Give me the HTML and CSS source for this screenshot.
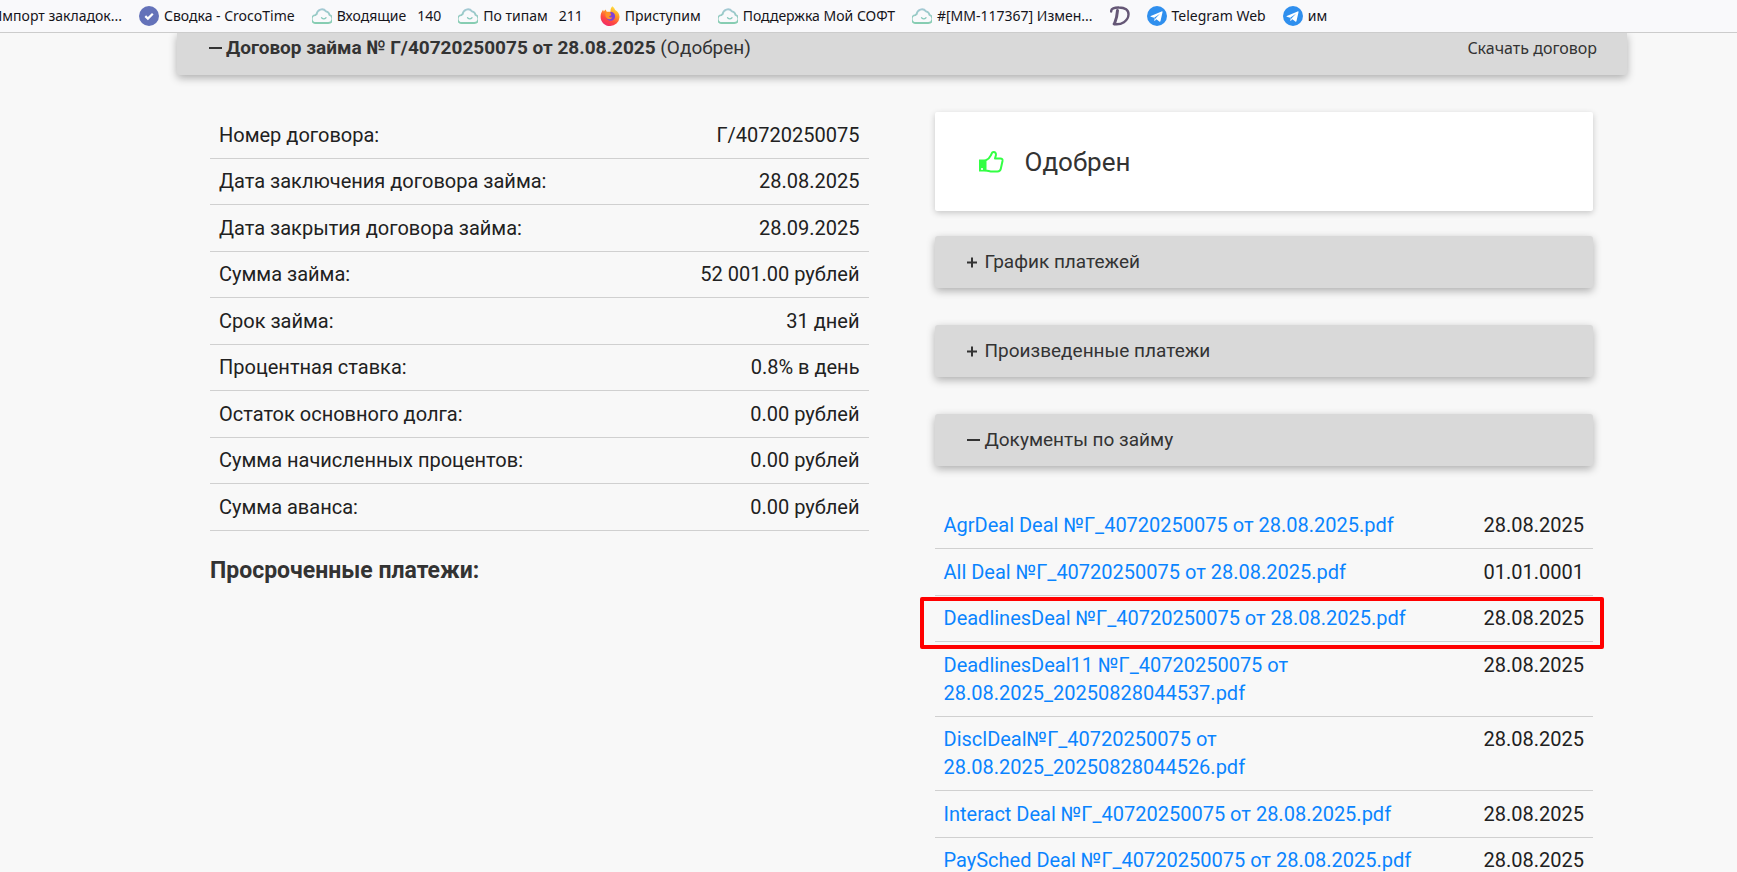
FILE: index.html
```html
<!DOCTYPE html>
<html lang="ru">
<head>
<meta charset="utf-8">
<title>Договор займа</title>
<link rel="stylesheet" href="styles.css">
</head>
<body>
<svg class="sprite" aria-hidden="true">
  <defs>
    <linearGradient id="cloud-line" x1="0" y1="0" x2="0" y2="1">
      <stop offset="0" stop-color="#a3c9d3"/>
      <stop offset="1" stop-color="#86cdb1"/>
    </linearGradient>
    <linearGradient id="fox-body" x1="0.8" y1="0" x2="0.3" y2="1">
      <stop offset="0" stop-color="#fff04a"/>
      <stop offset="0.35" stop-color="#ffa025"/>
      <stop offset="0.7" stop-color="#ff4a3f"/>
      <stop offset="1" stop-color="#f02a6b"/>
    </linearGradient>
    <symbol id="cloud" viewBox="0 0 20 20">
      <path d="M4.500 16.300H15.500a3.700 3.700 0 0 0 1.300-7.200 4 4 0 0 0-3.200-3.300A4.700 4.700 0 0 0 5.200 8.300 3.300 3.300 0 0 0 4 9.300 3.500 3.500 0 0 0 4.500 16.300z" fill="none" stroke="url(#cloud-line)" stroke-width="1.600" stroke-linejoin="round"/>
      <path d="M9.600 11.600q2 1.900 4 0" fill="none" stroke="#86c9bb" stroke-width="1.200" stroke-linecap="round"/>
    </symbol>
    <symbol id="telegram" viewBox="0 0 20 20">
      <circle cx="10" cy="10" r="10" fill="#2f8fee"/>
      <path d="M3.800 9.900 14.600 5.400c.8-.3 1.100.1.900.9l-2 8.700c-.2.700-.6.800-1.200.4l-2.900-2.200-1.500 1.500c-.3.300-.7.200-.7-.3l-.1-2.700-3.200-1c-.7-.2-.7-.6-.1-.8z" fill="#fff"/>
      <path d="M7.200 11.800 13 7.700l-4.600 4.800-.6 2z" fill="#2f8fee"/>
    </symbol>
  </defs>
</svg>

<nav class="bookmarks" aria-label="Закладки">
  <a class="bookmark bookmark-cut" href="#">Импорт закладок...</a>
  <a class="bookmark" href="#"><svg class="favicon" viewBox="0 0 20 20"><circle cx="10" cy="10" r="10" fill="#6472b9"/><path d="M6.300 10.100l2.600 2.500 4.900-4.900" fill="none" stroke="#fff" stroke-width="2.200"/></svg><span>Сводка - CrocoTime</span></a>
  <a class="bookmark" href="#"><svg class="favicon" viewBox="1 1 18 18"><use href="#cloud" width="20" height="20"/></svg><span>Входящие</span><span class="count">140</span></a>
  <a class="bookmark" href="#"><svg class="favicon" viewBox="1 1 18 18"><use href="#cloud" width="20" height="20"/></svg><span>По типам</span><span class="count">211</span></a>
  <a class="bookmark" href="#"><svg class="favicon" viewBox="0 0 20 20"><path d="M12.300.2c1.800 1.300 2.500 2.500 2.900 3.900 2.600 1.300 4.400 4 4.300 7.100A9.400 9.400 0 0 1 10 20C4.800 20 .6 16 .6 10.900c0-3 .9-5 2.400-7.200l.8 1.900c.6-.8 1-1.300 1.900-2l.9 2.100 4 .1c-.3-2.200.3-4.200 1.700-5.600z" fill="url(#fox-body)"/><path d="M10.600 5.800c3 .2 4.600 2.200 4.500 4.700-.1 2.400-2 4.300-4.400 4.300-2.600 0-4.600-1.700-4.700-4.300l2.900.2 2.300-1.600c-.8-.8-1.400-1.800-.6-3.300z" fill="#8040d8"/><path d="M6 5.700l3.500 1c.8.8 1.600 1.200 1.700 2.200-.8.500-1.800.5-2.200 1.500.6 1.100 2 1.400 3.300.8-.9 2.200-3.900 2.700-5.600 1.100C5.200 10.800 5 8 6 5.700z" fill="#ff9328"/></svg><span>Приступим</span></a>
  <a class="bookmark" href="#"><svg class="favicon" viewBox="1 1 18 18"><use href="#cloud" width="20" height="20"/></svg><span>Поддержка Мой СОФТ</span></a>
  <a class="bookmark" href="#"><svg class="favicon" viewBox="1 1 18 18"><use href="#cloud" width="20" height="20"/></svg><span>#[MM-117367] Измен...</span></a>
  <a class="bookmark" href="#" aria-label="D"><svg class="favicon" viewBox="0 0 20 20" fill="none" stroke="#655776" stroke-linecap="round"><path d="M7.500 4.500C7.200 10 6 14 4.500 17.800" stroke-width="3"/><path d="M1.200 5.500C.8 2.500 4.500 1.400 9 1.500c6 0 9.700 2.300 9.500 7C18.200 15 11.500 19.300 3.800 18" stroke-width="2.400"/></svg></a>
  <a class="bookmark" href="#"><svg class="favicon"><use href="#telegram"/></svg><span>Telegram Web</span></a>
  <a class="bookmark" href="#"><svg class="favicon"><use href="#telegram"/></svg><span>им</span></a>
</nav>

<main class="page">
  <header class="deal-bar">
    <button class="deal-toggle" type="button"><svg class="sign" viewBox="0 0 13 13"><path d="M0 6h13" /></svg><span><b>Договор займа № Г/40720250075 от 28.08.2025</b> (Одобрен)</span></button>
    <a class="download" href="#">Скачать договор</a>
  </header>

  <div class="columns">
    <section class="column">
      <table class="rows">
        <tbody>
          <tr><th scope="row">Номер договора:</th><td>Г/40720250075</td></tr>
          <tr><th scope="row">Дата заключения договора займа:</th><td>28.08.2025</td></tr>
          <tr><th scope="row">Дата закрытия договора займа:</th><td>28.09.2025</td></tr>
          <tr><th scope="row">Сумма займа:</th><td>52 001.00 рублей</td></tr>
          <tr><th scope="row">Срок займа:</th><td>31 дней</td></tr>
          <tr><th scope="row">Процентная ставка:</th><td>0.8% в день</td></tr>
          <tr><th scope="row">Остаток основного долга:</th><td>0.00 рублей</td></tr>
          <tr><th scope="row">Сумма начисленных процентов:</th><td>0.00 рублей</td></tr>
          <tr><th scope="row">Сумма аванса:</th><td>0.00 рублей</td></tr>
        </tbody>
      </table>
      <h2 class="overdue">Просроченные платежи:</h2>
    </section>

    <section class="column">
      <div class="status">
        <svg class="thumb" viewBox="0 0 25 22"><path d="M0 8.500h6.500v12H0z" fill="#3f4"/><circle cx="3" cy="18" r="1.100" fill="#fff"/><path d="M6.500 9.500C9 8.500 11 6.500 12 4.200c.5-1.500.8-3.200 2.600-3.200 1.900 0 2.600 1.600 2.300 3.300L16 7.500h5.200c2 0 2.500 1.100 2.300 2.500l-1.700 7.800c-.4 2-1.600 2.700-3.300 2.700h-5C10.500 20.500 9 19.500 6.500 19.500z" fill="none" stroke="#3f4" stroke-width="2" stroke-linejoin="round"/></svg>
        <span>Одобрен</span>
      </div>
      <div class="accordion">
        <button class="panel" type="button"><svg class="sign" viewBox="0 0 13 13"><path d="M0 6.500h10M5 1.500v10"/></svg><span>График платежей</span></button>
        <button class="panel" type="button"><svg class="sign" viewBox="0 0 13 13"><path d="M0 6.500h10M5 1.500v10"/></svg><span>Произведенные платежи</span></button>
        <button class="panel" type="button" aria-expanded="true"><svg class="sign" viewBox="0 0 13 13"><path d="M0 6h13"/></svg><span>Документы по займу</span></button>
      </div>
      <table class="rows documents">
        <tbody>
          <tr><th scope="row"><a href="#">AgrDeal Deal №Г_40720250075 от 28.08.2025.pdf</a></th><td>28.08.2025</td></tr>
          <tr><th scope="row"><a href="#">All Deal №Г_40720250075 от 28.08.2025.pdf</a></th><td>01.01.0001</td></tr>
          <tr class="marked"><th scope="row"><a href="#">DeadlinesDeal №Г_40720250075 от 28.08.2025.pdf</a></th><td>28.08.2025</td></tr>
          <tr><th scope="row"><a href="#">DeadlinesDeal11 №Г_40720250075 от 28.08.2025_20250828044537.pdf</a></th><td>28.08.2025</td></tr>
          <tr><th scope="row"><a href="#">DisclDeal№Г_40720250075 от 28.08.2025_20250828044526.pdf</a></th><td>28.08.2025</td></tr>
          <tr><th scope="row"><a href="#">Interact Deal №Г_40720250075 от 28.08.2025.pdf</a></th><td>28.08.2025</td></tr>
          <tr><th scope="row"><a href="#">PaySched Deal №Г_40720250075 от 28.08.2025.pdf</a></th><td>28.08.2025</td></tr>
        </tbody>
      </table>
    </section>
  </div>
</main>
</body>
</html>
```

FILE: styles.css
```css
* { box-sizing: border-box; }

html { height: 100%; }

body {
  display: flex;
  flex-direction: column;
  height: 100%;
  margin: 0;
  overflow: hidden;
  background: #f8f8f8;
  color: #212121;
  font-family: Roboto, sans-serif;
  font-size: 20px;
  line-height: 28px;
}

a { color: inherit; text-decoration: none; }

button {
  border: 0;
  background: none;
  color: inherit;
  font: inherit;
  text-align: left;
}

.sprite { position: absolute; width: 0; height: 0; }

.bookmarks {
  position: relative;
  z-index: 1;
  display: flex;
  flex: none;
  gap: 17px;
  height: 33px;
  padding-bottom: 1px;
  overflow: hidden;
  border-bottom: 1px solid #cccccc;
  background: #f9f9fb;
  color: #15141a;
  font-family: "Noto Sans", sans-serif;
  font-size: 14px;
  line-height: 20px;
  white-space: nowrap;
}

.bookmark { display: flex; flex: none; align-items: center; gap: 5px; }
.bookmark-cut { justify-content: flex-end; width: 122px; }
.favicon { display: block; width: 20px; height: 20px; }
.count { margin-left: 6px; }

.page { flex: 1; min-height: 0; padding: 0 110px 0 177px; }

.deal-bar {
  display: flex;
  justify-content: space-between;
  padding: 1px 30px 13px 32px;
  border-radius: 0 0 3px 3px;
  background: #d9d9d9;
  box-shadow: 0 3px 8px rgba(0, 0, 0, 0.3);
  color: #333333;
  font-size: 19px;
}

.deal-toggle { display: flex; align-items: center; gap: 4px; padding: 0; }
.sign { display: block; flex: none; width: 13px; height: 13px; fill: none; stroke: #333333; stroke-width: 2; }
.download { font-family: "Noto Sans", sans-serif; font-size: 16px; }

.columns {
  display: grid;
  grid-template-columns: 1fr 1fr;
  gap: 66px;
  padding: 37px 34px 0 33px;
}

.rows { width: 100%; border-collapse: separate; border-spacing: 0; }

.rows th,
.rows td {
  padding: 9px;
  border-bottom: 1px solid #d0d0d0;
  font-weight: 400;
  text-align: left;
  vertical-align: top;
}

.rows td { text-align: right; white-space: nowrap; }
.rows:not(.documents) tr:nth-child(even) > *,
.documents tr:nth-child(odd) > * { padding-top: 8px; }

.overdue { margin: 26px 0 0; color: #333333; font-size: 23px; font-weight: 700; }

.status {
  display: flex;
  align-items: center;
  gap: 21px;
  padding: 32px 44px 31px;
  border-radius: 2px;
  background: #ffffff;
  box-shadow: 0 2px 6px rgba(0, 0, 0, 0.2);
  color: #333333;
  font-size: 26px;
  line-height: 36px;
}

.thumb { display: block; width: 25px; height: 22px; }

.accordion { display: grid; gap: 37px; margin: 25px 0 37px; }

.panel {
  display: flex;
  align-items: center;
  gap: 5px;
  padding: 12px 32px;
  border-radius: 3px;
  background: #d9d9d9;
  box-shadow: 0 3px 8px rgba(0, 0, 0, 0.3);
  color: #333333;
  font-size: 19px;
}

.documents th { width: 78%; }
.documents a { color: #0a84ff; }

.marked { position: relative; }

.marked td::after {
  position: absolute;
  inset: 1px -11px -7px -15px;
  border: 4px solid #ff0000;
  border-radius: 2px;
  content: "";
  pointer-events: none;
}
```
